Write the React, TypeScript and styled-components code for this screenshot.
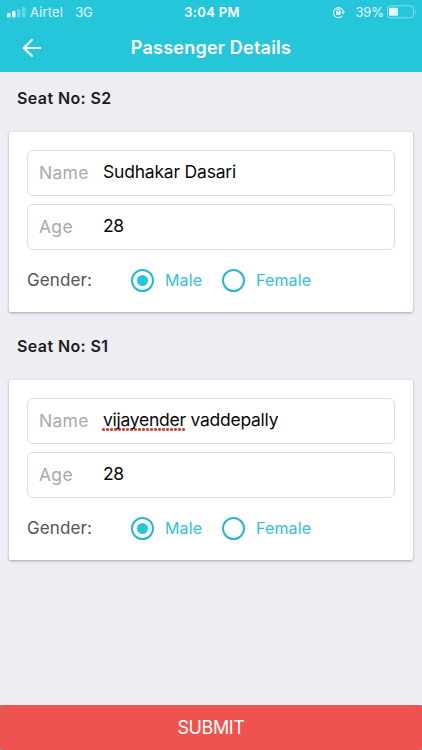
import React from "react";
import styled, { createGlobalStyle } from "styled-components";

const TEAL = "#26c6da";

const GlobalStyle = createGlobalStyle`
  * { box-sizing: border-box; }
  body { margin: 0; background: #efeef5; font-family: Inter, "Liberation Sans", sans-serif; }
`;

const Screen = styled.div`
  display: flex;
  flex-direction: column;
  width: 422px;
  height: 750px;
  background: #efeef5;
  overflow: hidden;
`;

const Header = styled.header`
  flex: none;
  height: 72px;
  background: ${TEAL};
  color: #fff;
`;

const StatusBar = styled.div`
  display: grid;
  grid-template-columns: 1fr auto 1fr;
  align-items: center;
  height: 24px;
  padding: 0 5px 0 7px;
  font-size: 13px;
  line-height: 24px;
`;

const StatusGroup = styled.div<{ $end?: boolean }>`
  display: flex;
  align-items: center;
  justify-content: ${(p) => (p.$end ? "flex-end" : "flex-start")};
  opacity: 0.88;
`;

const Carrier = styled.span`
  margin-left: 4px;
  letter-spacing: 0.17px;
`;

const Network = styled.span`
  margin-left: 12px;
  letter-spacing: -0.1px;
`;

const Clock = styled.span`
  font-weight: 600;
  letter-spacing: 0.3px;
`;

const BatteryLevel = styled.span`
  margin: 0 3px 0 9px;
  letter-spacing: -0.1px;
`;

const NavBar = styled.div`
  display: grid;
  grid-template-columns: 64px 1fr 64px;
  align-items: center;
  height: 48px;
`;

const BackButton = styled.button`
  display: flex;
  align-items: center;
  justify-content: center;
  height: 46px;
  padding: 0;
  border: 0;
  background: none;
  color: #fff;
`;

const Title = styled.h1`
  margin: 0;
  text-align: center;
  font-size: 18px;
  font-weight: 600;
  line-height: 48px;
  letter-spacing: 0.22px;
`;

const Content = styled.main`
  flex: 1;
`;

const SeatTitle = styled.h2`
  margin: 0;
  height: 60px;
  padding-left: 17px;
  font-size: 16px;
  font-weight: 600;
  line-height: 52px;
  letter-spacing: 0.4px;
  color: #1c1c20;
`;

const Card = styled.section`
  display: flex;
  flex-direction: column;
  gap: 8px;
  height: 180px;
  margin: 0 9px 8px;
  padding: 18px;
  border-radius: 2px;
  background: #fff;
  box-shadow: 0 1px 3px rgba(0, 0, 0, 0.32);
`;

const Field = styled.div`
  display: flex;
  align-items: center;
  flex: none;
  height: 46px;
  padding: 0 11px 2px;
  border: 1px solid #dedee0;
  border-radius: 6px;
  font-size: 17.5px;
`;

const FieldLabel = styled.span`
  width: 64px;
  padding-top: 1px;
  letter-spacing: 0.3px;
  color: #a9a9ab;
`;

const FieldValue = styled.span<{ $spacing: number }>`
  padding-bottom: 1px;
  color: #080808;
  letter-spacing: ${(p) => p.$spacing}px;
`;

const Misspelled = styled.span`
  margin-left: -1px;
  padding: 0 0 1px 1px;
  background: radial-gradient(circle at 1.5px 1.5px, #e53935 1.25px, transparent 1.7px) left bottom / 4px 3px repeat-x;
`;

const GenderRow = styled.div`
  display: flex;
  align-items: center;
  flex: none;
  height: 44px;
`;

const GenderLabel = styled.span`
  width: 104px;
  font-size: 17px;
  letter-spacing: 0.12px;
  color: #555;
`;

const Radio = styled.span`
  display: flex;
  align-items: center;
  justify-content: center;
  width: 23px;
  height: 23px;
  border: 2px solid #29b8cb;
  border-radius: 50%;
`;

const RadioDot = styled.span`
  width: 11px;
  height: 11px;
  border-radius: 50%;
  background: ${TEAL};
`;

const RadioText = styled.span<{ $width: number }>`
  width: ${(p) => p.$width}px;
  margin-left: 11px;
  white-space: nowrap;
  font-size: 16px;
  letter-spacing: 0.15px;
  color: #35c0d2;
`;

const SubmitBar = styled.footer`
  flex: none;
  height: 45px;
  background: ${TEAL};
`;

const SubmitButton = styled.button`
  display: block;
  width: 100%;
  height: 45px;
  padding: 0;
  border: 0;
  border-radius: 3px;
  background: #ef5350;
  color: #fff;
  font-family: inherit;
  font-size: 18px;
  line-height: 45px;
  letter-spacing: -0.4px;
`;

const SignalIcon = () => (
  <svg width="19" height="12" viewBox="0 0 19 12" fill="#fff">
    <rect x="0" y="7" width="3.5" height="4.5" rx="1" />
    <rect x="5" y="5" width="3.5" height="6.5" rx="1" />
    <rect x="10" y="3" width="3.5" height="8.5" rx="1" opacity="0.35" />
    <rect x="15" y="1" width="3.5" height="10.5" rx="1" opacity="0.35" />
  </svg>
);

const RotationLockIcon = () => (
  <svg width="14" height="13" viewBox="0 0 14 13" fill="none" stroke="#fff" strokeWidth="1.1">
    <path d="M10.3 9.8A5 5 0 1 1 11.3 5.7" />
    <path d="M9.3 5.8h4l-2 2.5z" fill="#fff" stroke="none" />
    <rect x="4" y="5.6" width="4.8" height="3.5" rx="0.4" fill="#fff" stroke="none" />
    <path d="M5 6V4.6a1.4 1.4 0 0 1 2.8 0V6" />
  </svg>
);

const BatteryIcon = () => (
  <svg width="30" height="14" viewBox="0 0 30 14" fill="none">
    <rect x="0.6" y="0.8" width="25.8" height="12" rx="2.7" stroke="#fff" strokeOpacity="0.5" />
    <rect x="2" y="2.8" width="9" height="8" rx="0.8" fill="#fff" />
    <path d="M28 4.5q1.5 2.3 0 4.6z" fill="#fff" fillOpacity="0.55" />
  </svg>
);

const BackIcon = () => (
  <svg width="20" height="20" viewBox="0 0 20 20" fill="none" stroke="#fff" strokeWidth="2" strokeLinecap="round" strokeLinejoin="round">
    <path d="M18.3 10H2M10 1.8L1.8 10l8.2 8" />
  </svg>
);

interface Passenger {
  seat: string;
  name: React.ReactNode;
  spacing: number;
  age: string;
}

const passengers: Passenger[] = [
  { seat: "S2", name: "Sudhakar Dasari", spacing: -0.2, age: "28" },
  { seat: "S1", name: <><Misspelled>vijayender</Misspelled> vaddepally</>, spacing: -0.26, age: "28" },
];

export default function App() {
  return (
    <Screen>
      <GlobalStyle />
      <Header>
        <StatusBar>
          <StatusGroup>
            <SignalIcon />
            <Carrier>Airtel</Carrier>
            <Network>3G</Network>
          </StatusGroup>
          <Clock>3:04 PM</Clock>
          <StatusGroup $end>
            <RotationLockIcon />
            <BatteryLevel>39%</BatteryLevel>
            <BatteryIcon />
          </StatusGroup>
        </StatusBar>
        <NavBar>
          <BackButton aria-label="Back"><BackIcon /></BackButton>
          <Title>Passenger Details</Title>
        </NavBar>
      </Header>
      <Content>
        {passengers.map((p) => (
          <React.Fragment key={p.seat}>
            <SeatTitle>Seat No: {p.seat}</SeatTitle>
            <Card>
              <Field>
                <FieldLabel>Name</FieldLabel>
                <FieldValue $spacing={p.spacing}>{p.name}</FieldValue>
              </Field>
              <Field>
                <FieldLabel>Age</FieldLabel>
                <FieldValue $spacing={-0.3}>{p.age}</FieldValue>
              </Field>
              <GenderRow>
                <GenderLabel>Gender:</GenderLabel>
                <Radio><RadioDot /></Radio>
                <RadioText $width={57}>Male</RadioText>
                <Radio />
                <RadioText $width={57}>Female</RadioText>
              </GenderRow>
            </Card>
          </React.Fragment>
        ))}
      </Content>
      <SubmitBar>
        <SubmitButton>SUBMIT</SubmitButton>
      </SubmitBar>
    </Screen>
  );
}
